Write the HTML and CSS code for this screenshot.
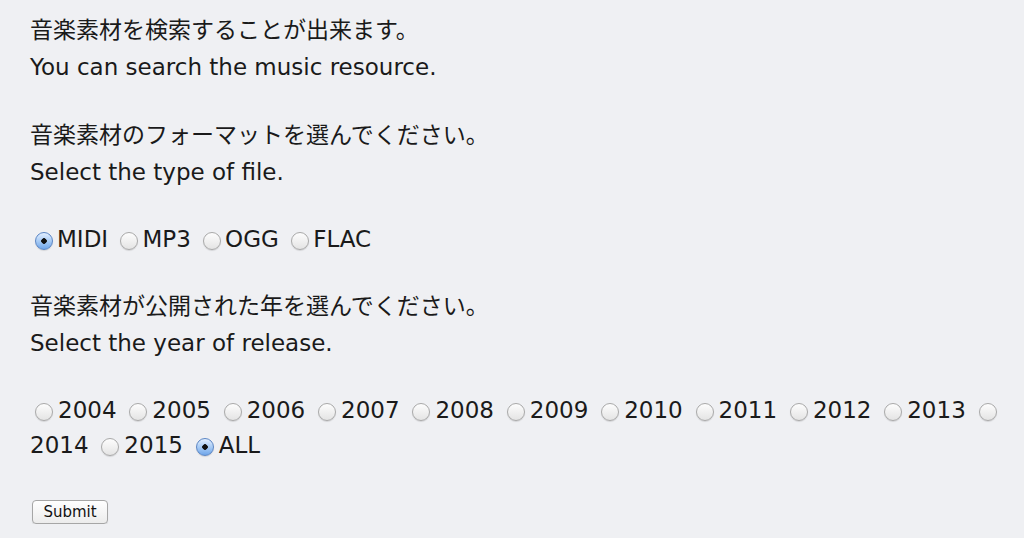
FILE: index.html
```html
<!DOCTYPE html>
<html lang="ja">
<head>
  <meta charset="UTF-8">
  <title>音楽素材検索</title>
  <link rel="stylesheet" href="styles.css">
</head>
<body>
  <form class="search">
    <p>音楽素材を検索することが出来ます。<br>You can search the music resource.</p>

    <p>音楽素材のフォーマットを選んでください。<br>Select the type of file.</p>

    <p class="choices"><input type="radio" name="format" value="midi" checked>MIDI <input type="radio" name="format" value="mp3">MP3 <input type="radio" name="format" value="ogg">OGG <input type="radio" name="format" value="flac">FLAC</p>

    <p>音楽素材が公開された年を選んでください。<br>Select the year of release.</p>

    <p class="choices years"><input type="radio" name="year" value="2004">2004 <input type="radio" name="year" value="2005">2005 <input type="radio" name="year" value="2006">2006 <input type="radio" name="year" value="2007">2007 <input type="radio" name="year" value="2008">2008 <input type="radio" name="year" value="2009">2009 <input type="radio" name="year" value="2010">2010 <input type="radio" name="year" value="2011">2011 <input type="radio" name="year" value="2012">2012 <input type="radio" name="year" value="2013">2013 <input type="radio" name="year" value="2014">2014 <input type="radio" name="year" value="2015">2015 <input type="radio" name="year" value="all" checked>ALL</p>

    <button type="submit">Submit</button>
  </form>
</body>
</html>
```

FILE: styles.css
```css
body {
  margin: 0;
  padding: 12px 20px 0 30px;
  background: #eff0f3;
  color: #1a1a1a;
  font-family: "DejaVu Sans", "Noto Sans CJK JP", sans-serif;
  font-size: 23px;
  line-height: 37px;
}

.search p {
  margin: 0 0 31px;
}

.search .choices {
  line-height: 35px;
}

.search .years {
  word-spacing: 0.5px;
}

input[type="radio"] {
  -webkit-appearance: none;
  appearance: none;
  width: 18px;
  height: 18px;
  margin: 0 4px 0 5px;
  border: 1px solid #a9a9a9;
  border-radius: 50%;
  background: linear-gradient(#fdfdfd, #e4e4e4);
  box-shadow: 0 1px 1px rgba(0,0,0,0.12);
  vertical-align: middle;
  box-sizing: border-box;
}

.years input[type="radio"] {
  margin-right: 5px;
}

input[type="radio"]:checked {
  border-color: #5b86c4;
  background:
    radial-gradient(circle, #111 0 2.5px, transparent 3px),
    linear-gradient(#e3efff, #a9ccf5 50%, #6fa6ea);
}

button {
  display: block;
  margin: 37px 0 0 2px;
  width: 76px;
  height: 24px;
  padding: 0;
  font-family: "DejaVu Sans", sans-serif;
  font-size: 15px;
  color: #111;
  border: 1px solid #a6a6a6;
  border-radius: 4px;
  background: linear-gradient(#ffffff, #ececec);
  box-shadow: 0 1px 1px rgba(0,0,0,0.1);
}
```
